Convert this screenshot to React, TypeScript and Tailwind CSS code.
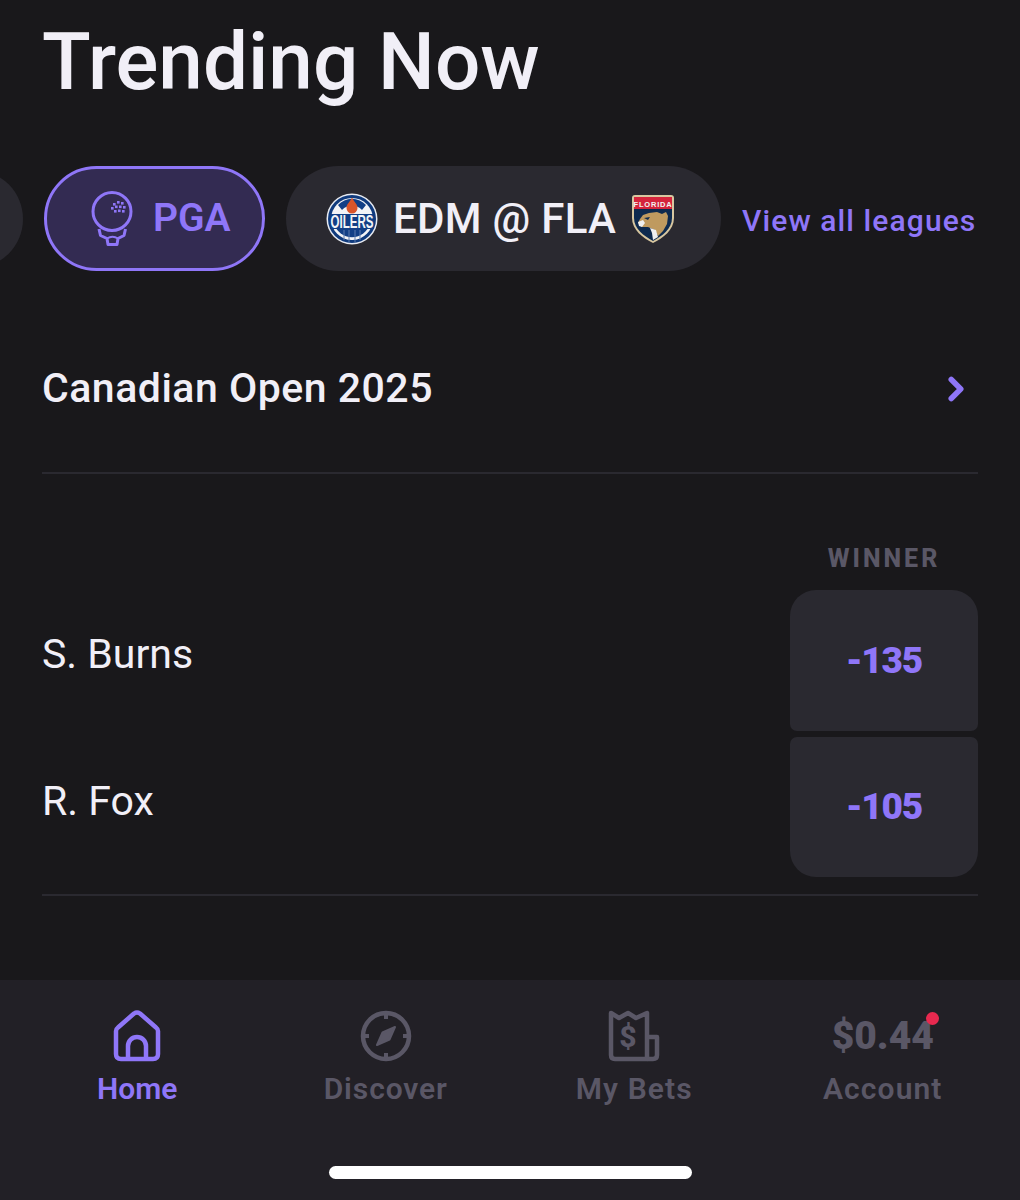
import { ChevronRight } from "lucide-react";

const purple = "#8f76f8";

const GolfIcon = () => (
  <svg width="44" height="58" viewBox="0 0 44 58" fill="none" stroke={purple} strokeWidth="3">
    <circle cx="21" cy="21.500" r="19" />
    <path d="M8 39 L9.500 45.500 L16 48.500 L17 54.500 H26 L27 48.500 L33 45.500 L34.500 39" strokeLinejoin="round" />
    <path d="M16 48.500 Q21.500 45 27 48.500" strokeWidth="2" />
    <g fill={purple} stroke="none">
      <rect x="22" y="13" width="2.600" height="2.600" />
      <rect x="26" y="11" width="2.600" height="2.600" />
      <rect x="30" y="12" width="2.600" height="2.600" />
      <rect x="20" y="17" width="2.600" height="2.600" />
      <rect x="24" y="15.500" width="2.600" height="2.600" />
      <rect x="28" y="15.500" width="2.600" height="2.600" />
      <rect x="32" y="16" width="2.600" height="2.600" />
      <rect x="23" y="20" width="2.600" height="2.600" />
      <rect x="27" y="19.500" width="2.600" height="2.600" />
      <rect x="31" y="20" width="2.600" height="2.600" />
    </g>
  </svg>
);

const OilersLogo = () => (
  <svg width="52" height="52" viewBox="0 0 52 52">
    <circle cx="26" cy="26" r="25.500" fill="#e8ebf2" />
    <circle cx="26" cy="26" r="24" fill="#0f3a7d" />
    <circle cx="26" cy="26" r="21" fill="#f2f3f6" />
    <path d="M8 30 H44 A18.500 18.500 0 0 1 8 30 Z" fill="#123f86" />
    <path d="M12 12 A19 19 0 0 1 40 12 L36 17 A14 14 0 0 0 16 17 Z" fill="#123f86" />
    <path d="M26 4.500 C28 9 31.500 11 31.500 15 A5.500 5.500 0 0 1 20.500 15 C20.500 11 24 9 26 4.500 Z" fill="#d9552a" />
    <rect x="5" y="21" width="42" height="15" fill="#123f86" />
    <text transform="translate(26 34.500) scale(1.050 1.600)" textAnchor="middle" fontFamily="'Liberation Sans', sans-serif" fontSize="11" fontWeight="700" fill="#f2f3f6">OILERS</text>
    <path d="M18 37 V47 M23 37 V49 M29 37 V49 M34 37 V47" stroke="#5d7db0" strokeWidth="1" />
  </svg>
);

const PanthersLogo = () => (
  <svg width="44" height="50" viewBox="0 0 44 50">
    <path d="M1 4 Q1 1 4 1 H40 Q43 1 43 4 V24 C43 36 32 44 22 49 C12 44 1 36 1 24 Z" fill="#d8c7a0" />
    <path d="M3 3 H41 V15 H3 Z" fill="#d5243c" />
    <text x="22" y="12.500" textAnchor="middle" fontFamily="'Liberation Sans', sans-serif" fontSize="7.500" fontWeight="700" letterSpacing="0.800" fill="#f3f3f3">FLORIDA</text>
    <path d="M3 15 H41 V24 C41 35 31 42 22 47 C13 42 3 35 3 24 Z" fill="#0e2a4e" />
    <path d="M9 25 L12 21 L18 19 L26 18 L31 20 L35 18 L37 22 L36 30 L32 37 L27 42 L24 36 L17 33 L11 33 L7 29 Z" fill="#bf9a5f" />
    <path d="M7 28 L12 26 L14 29 L11 33 L8 32 Z" fill="#f0f0f0" />
    <path d="M19 34 L25 36 L27 43 L22 46 L21 39 Z" fill="#f0f0f0" />
    <path d="M13 24 L19 23 L17 26 Z" fill="#0e2a4e" />
  </svg>
);

const HomeIcon = () => (
  <svg width="48" height="52" viewBox="0 0 48 52" fill="none" stroke={purple} strokeWidth="4.500" strokeLinejoin="round">
    <path d="M3 21 Q3 19 5 17.500 L21 3.500 Q24 1.500 27 3.500 L43 17.500 Q45 19 45 21 V44 Q45 49 40 49 H8 Q3 49 3 44 Z" />
    <path d="M15 49 V36 A9 9 0 0 1 33 36 V49" />
  </svg>
);

const CompassIcon = () => (
  <svg width="52" height="52" viewBox="0 0 52 52" fill="none" stroke="#5a5766" strokeWidth="4.500">
    <circle cx="26" cy="26" r="23" />
    <path d="M26 3 V9 M26 43 V49 M3 26 H9 M43 26 H49" strokeWidth="4" />
    <path d="M35 17 L29.500 29.500 L17 35 L22.500 22.500 Z" fill="#5a5766" stroke="#5a5766" strokeWidth="2" strokeLinejoin="round" />
  </svg>
);

const BetsIcon = () => (
  <svg width="52" height="52" viewBox="0 0 52 52" fill="none" stroke="#5a5766" strokeWidth="4.500" strokeLinejoin="round">
    <path d="M3 3 L11 8 L20 3 L28 8 L39 3 V49 H7 Q3 49 3 45 Z" />
    <path d="M39 27 H49 V45 Q49 49 45 49 H39" />
    <text x="20" y="37" textAnchor="middle" fontFamily="'Roboto', sans-serif" fontSize="30" fontWeight="800" fill="#5a5766" stroke="none">$</text>
  </svg>
);

export default function App() {
  return (
    <div className="w-[1020px] h-[1200px] flex flex-col overflow-hidden bg-[#19181b] font-['Roboto',sans-serif]">
      <h1 className="h-[166px] pl-[42px] pt-[14px] text-[80px] leading-[96px] font-medium text-[#f1eff7]">Trending Now</h1>

      <div className="flex items-center h-[105px]">
        <div className="w-[100px] h-[98px] ml-[-77px] rounded-full bg-[#2a2930] shrink-0" />
        <div className="ml-[21px] w-[221px] h-[105px] shrink-0 rounded-full border-[3px] border-[#8f76f8] bg-[#332b52] flex items-center pl-[44px] gap-[18px]">
          <GolfIcon />
          <span className="text-[39px] font-semibold text-[#8f76f8]">PGA</span>
        </div>
        <div className="ml-[21px] w-[435px] h-[105px] shrink-0 rounded-full bg-[#2a2930] flex items-center pl-[40px] gap-[15px]">
          <OilersLogo />
          <span className="text-[42px] tracking-[0.300px] font-medium text-[#f1eff7] whitespace-nowrap">EDM @ FLA</span>
          <PanthersLogo />
        </div>
        <span className="ml-[21px] pt-[3px] text-[30px] tracking-[1.100px] font-medium text-[#8f76f8] whitespace-nowrap">View all leagues</span>
      </div>

      <div className="mx-[42px] h-[203px] flex items-center justify-between border-b-2 border-[#2a2930] pt-[35px] pr-[3px]">
        <span className="text-[41px] tracking-[0.500px] font-medium text-[#f1eff7]">Canadian Open 2025</span>
        <ChevronRight size={38} color={purple} strokeWidth={3.500} />
      </div>

      <div className="mx-[42px] h-[422px] border-b-2 border-[#2a2930] flex flex-col items-end">
        <div className="w-[188px] mt-[69px] h-[32px] text-center text-[25px] leading-[32px] font-extrabold tracking-[3px] text-[#5a5766]">WINNER</div>
        <div className="w-full flex items-center justify-between mt-[15px]">
          <span className="text-[41px] text-[#f1eff7] pb-[12px]">S. Burns</span>
          <div className="w-[188px] h-[141px] rounded-t-[26px] rounded-b-[7px] bg-[#2a2930] flex items-center justify-center text-[37px] font-black tracking-[-1.200px] text-[#8f76f8]">-135</div>
        </div>
        <div className="w-full flex items-center justify-between mt-[6px]">
          <span className="text-[41px] text-[#f1eff7] pb-[10px]">R. Fox</span>
          <div className="w-[188px] h-[140px] rounded-b-[26px] rounded-t-[7px] bg-[#2a2930] flex items-center justify-center text-[37px] font-black tracking-[-1.200px] text-[#8f76f8]">-105</div>
        </div>
      </div>

      <nav className="mt-[84px] flex-1 bg-[#222026] relative">
        <div className="grid grid-cols-4 px-[13px] pt-[30px]">
          <div className="flex flex-col items-center">
            <div className="h-[52px] flex items-center"><HomeIcon /></div>
            <span className="mt-[7px] text-[30px] leading-[40px] font-semibold text-[#8f76f8]">Home</span>
          </div>
          <div className="flex flex-col items-center">
            <div className="h-[52px] flex items-center"><CompassIcon /></div>
            <span className="mt-[7px] text-[30px] leading-[40px] font-semibold tracking-[0.900px] text-[#5a5766]">Discover</span>
          </div>
          <div className="flex flex-col items-center">
            <div className="h-[52px] flex items-center"><BetsIcon /></div>
            <span className="mt-[7px] text-[30px] leading-[40px] font-semibold tracking-[1.100px] text-[#5a5766]">My Bets</span>
          </div>
          <div className="flex flex-col items-center">
            <div className="h-[52px] flex items-center relative">
              <span className="text-[39px] font-black text-[#5a5766]">$0.44</span>
              <span className="absolute top-[2px] right-[-5px] w-[13px] h-[13px] rounded-full bg-[#e8294f]" />
            </div>
            <span className="mt-[7px] text-[30px] leading-[40px] font-semibold tracking-[1.100px] text-[#5a5766]">Account</span>
          </div>
        </div>
        <div className="absolute left-[329px] bottom-[21px] w-[363px] h-[13px] rounded-full bg-white" />
      </nav>
    </div>
  );
}
